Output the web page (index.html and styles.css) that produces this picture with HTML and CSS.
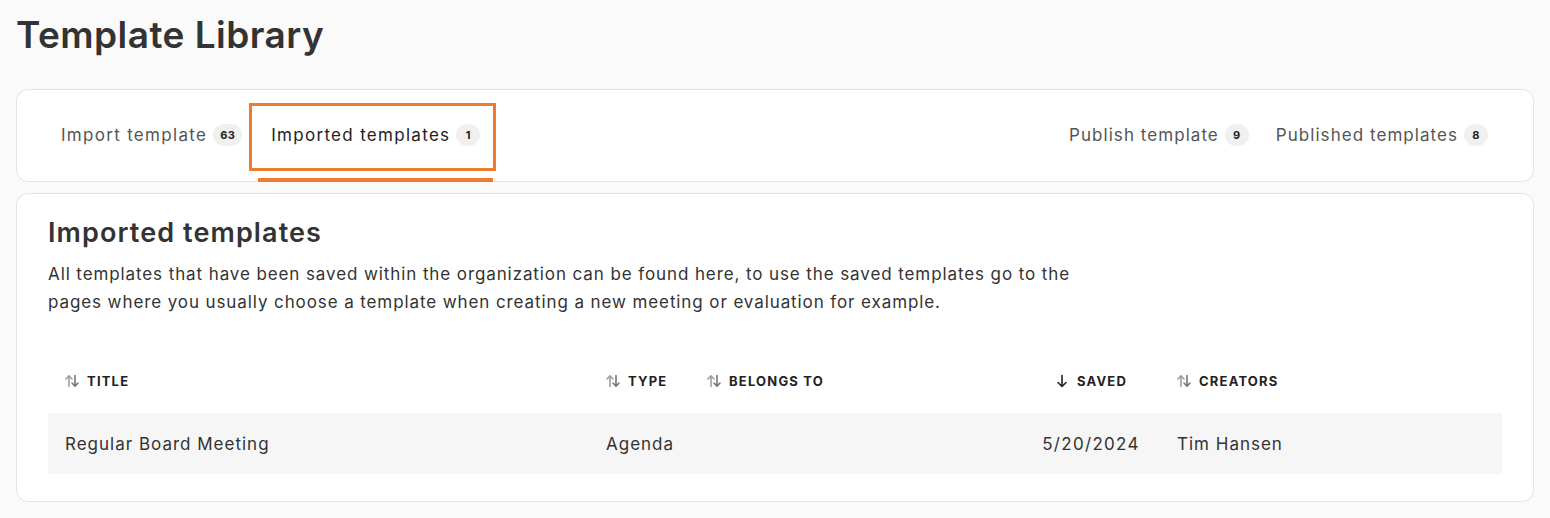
FILE: index.html
```html
<!DOCTYPE html>
<html lang="en">
<head>
<meta charset="utf-8">
<title>Template Library</title>
<link rel="stylesheet" href="styles.css">
</head>
<body>
<div class="page">
  <h1 class="page-title">Template Library</h1>

  <nav class="tabs-card">
    <div class="tabs-left">
      <div class="tab">Import template <span class="badge">63</span></div>
      <div class="tab tab-active">Imported templates <span class="badge">1</span></div>
    </div>
    <div class="tabs-right">
      <div class="tab">Publish template <span class="badge">9</span></div>
      <div class="tab">Published templates <span class="badge">8</span></div>
    </div>
  </nav>

  <section class="content-card">
    <h2 class="section-title">Imported templates</h2>
    <p class="section-desc">All templates that have been saved within the organization can be found here, to use the saved templates go to the pages where you usually choose a template when creating a new meeting or evaluation for example.</p>

    <div class="table">
      <div class="row head">
        <div class="cell"><span class="sort"><svg viewBox="0 0 14 14" width="14" height="14"><path class="up" d="M4 12.5V2M1 5L4 1.8L7 5"/><path class="down" d="M10 1.5V12M7 9L10 12.2L13 9"/></svg></span>TITLE</div>
        <div class="cell"><span class="sort"><svg viewBox="0 0 14 14" width="14" height="14"><path class="up" d="M4 12.5V2M1 5L4 1.8L7 5"/><path class="down" d="M10 1.5V12M7 9L10 12.2L13 9"/></svg></span>TYPE</div>
        <div class="cell"><span class="sort"><svg viewBox="0 0 14 14" width="14" height="14"><path class="up" d="M4 12.5V2M1 5L4 1.8L7 5"/><path class="down" d="M10 1.5V12M7 9L10 12.2L13 9"/></svg></span>BELONGS TO</div>
        <div class="cell center"><span class="sort"><svg viewBox="0 0 14 14" width="14" height="14"><path class="active" d="M7 1.5V12.5M3 8.5L7 12.5L11 8.5"/></svg></span>SAVED</div>
        <div class="cell"><span class="sort"><svg viewBox="0 0 14 14" width="14" height="14"><path class="up" d="M4 12.5V2M1 5L4 1.8L7 5"/><path class="down" d="M10 1.5V12M7 9L10 12.2L13 9"/></svg></span>CREATORS</div>
      </div>
      <div class="row body">
        <div class="cell">Regular Board Meeting</div>
        <div class="cell">Agenda</div>
        <div class="cell"></div>
        <div class="cell center">5/20/2024</div>
        <div class="cell">Tim Hansen</div>
      </div>
    </div>
  </section>
</div>
</body>
</html>
```

FILE: styles.css
```css
* { box-sizing: border-box; }
html, body { margin: 0; padding: 0; }
body {
  background: #fafafa;
  font-family: "Inter", "Lato", sans-serif;
  color: #333;
}
.page { padding: 12px 16px 16px 16px; }

.page-title {
  margin: 0 0 31px 0;
  font-size: 37px;
  font-weight: 600;
  color: #333;
  line-height: 46px;
  letter-spacing: 0.45px;
}

.tabs-card {
  background: #fff;
  border: 1px solid #e4e4e4;
  border-radius: 12px;
  height: 93px;
  display: flex;
  justify-content: space-between;
  align-items: stretch;
  padding: 0 45px 0 44px;
}
.tabs-left, .tabs-right { display: flex; align-items: stretch; gap: 7px; }
.tabs-right { gap: 27px; }
.tab {
  position: relative;
  display: flex;
  align-items: center;
  gap: 6px;
  font-size: 17px;
  letter-spacing: 1.3px;
  color: #555;
  white-space: nowrap;
  padding-bottom: 2px;
}
.tabs-right .tab { letter-spacing: 1.05px; }
.tab-active {
  color: #222;
  padding: 0 16px 2px 22px;
}
.tab-active::before {
  content: "";
  position: absolute;
  left: 0; right: 0; top: 13px; height: 62px;
  border: 3px solid #ef7a30;
}
.tab-active::after {
  content: "";
  position: absolute;
  left: 9px; right: 3px; bottom: -1px; height: 4px;
  background: #ef7a30;
}
.badge {
  display: inline-flex;
  align-items: center;
  justify-content: center;
  min-width: 24px;
  height: 22px;
  padding: 0 7px;
  border-radius: 11px;
  background: #f0f0f0;
  color: #222;
  font-size: 11px;
  font-weight: 700;
  letter-spacing: 0.4px;
}

.content-card {
  margin-top: 11px;
  background: #fff;
  border: 1px solid #e4e4e4;
  border-radius: 12px;
  padding: 21px 31px 27px 31px;
}
.section-title {
  margin: 0 0 9px 0;
  font-size: 27px;
  font-weight: 600;
  color: #333;
  line-height: 36px;
  letter-spacing: 1.1px;
}
.section-desc {
  margin: 0;
  max-width: 1050px;
  font-size: 17px;
  line-height: 28px;
  letter-spacing: 0.9px;
  color: #333;
}

.table { margin-top: 38px; }
.row {
  display: grid;
  grid-template-columns: 541px 101px 332px 138px 1fr;
  align-items: center;
}
.row.head { height: 54px; }
.row.body { height: 61px; background: #f6f6f6; margin-top: 5px; }
.cell { padding-left: 17px; white-space: nowrap; }
.cell.center { padding-left: 0; text-align: center; }
.head .cell {
  font-size: 13px;
  font-weight: 700;
  letter-spacing: 1.2px;
  color: #222;
  display: flex;
  align-items: center;
}
.head .cell.center { justify-content: center; }
.body .cell { font-size: 17px; letter-spacing: 1px; color: #333; }
.body .cell.center { letter-spacing: 1.3px; }
.sort { display: inline-flex; margin-right: 8px; }
.sort svg { display: block; fill: none; stroke-width: 1.6; stroke-linecap: round; stroke-linejoin: round; }
.sort .up { stroke: #a0a0a0; }
.sort .down { stroke: #777; }
.sort .active { stroke: #222; }
```
